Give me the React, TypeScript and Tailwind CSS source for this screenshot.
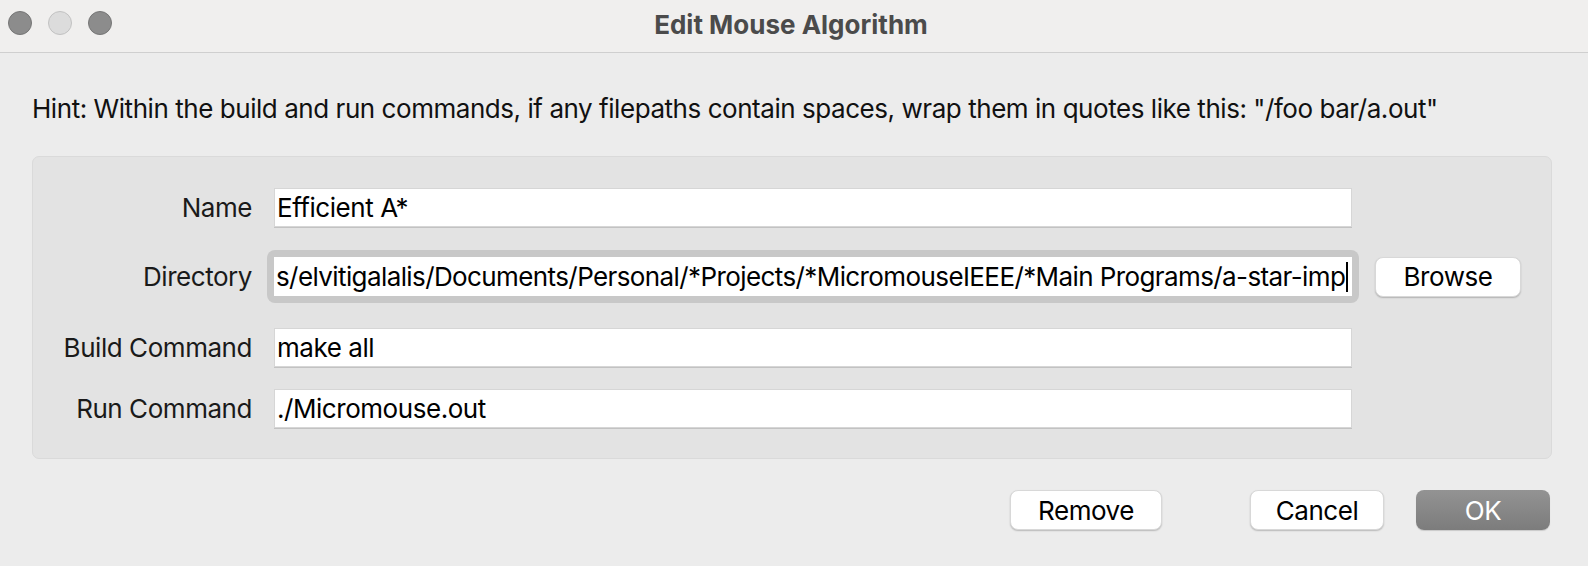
import React from "react";

const font = { fontFamily: "Inter, 'Noto Sans', sans-serif" };

function TrafficLights() {
  return (
    <div className="absolute left-[8px] top-[11px] flex gap-[16px]">
      <span className="size-[24px] rounded-full bg-[#8c8c8c] border border-[#767676]" />
      <span className="size-[24px] rounded-full bg-[#dcdcdc] border border-[#c2c2c2]" />
      <span className="size-[24px] rounded-full bg-[#8c8c8c] border border-[#767676]" />
    </div>
  );
}

function Field({ value }: { value: string }) {
  return (
    <div className="w-[1078px] h-[39px] bg-white border border-[#d6d6d6] shadow-[0_1px_0_#c2c2c2] flex items-center pl-[2px] text-[26px] tracking-[-0.45px] text-black whitespace-nowrap overflow-hidden">
      {value}
    </div>
  );
}

function Label({ children }: { children: React.ReactNode }) {
  return (
    <div className="w-[219px] text-right text-[26px] tracking-[-0.45px] text-[#1a1a1a] whitespace-nowrap">
      {children}
    </div>
  );
}

function Button({ children, primary, className }: { children: React.ReactNode; primary?: boolean; className?: string }) {
  return (
    <button
      className={`h-[40px] rounded-[8px] text-[26px] tracking-[-0.45px] flex items-center justify-center ${
        primary
          ? "bg-gradient-to-b from-[#939393] to-[#7c7c7c] text-white shadow-[0_1px_1px_rgba(0,0,0,0.15)]"
          : "bg-white text-black border border-[#d8d8d8] shadow-[0_1px_1.5px_rgba(0,0,0,0.22)]"
      } ${className ?? ""}`}
    >
      {children}
    </button>
  );
}

export default function App() {
  return (
    <div className="w-[1588px] h-[566px] bg-[#ececec] overflow-hidden" style={font}>
      <div className="relative h-[53px] bg-[#f0efee] border-b border-[#cfcfcf] flex items-center justify-center">
        <TrafficLights />
        <span className="text-[26px] font-bold text-[#4b4b4b] -ml-[6px] -mt-[4px]">Edit Mouse Algorithm</span>
      </div>

      <div className="px-[32px]">
        <p className="pt-[40px] text-[26px] tracking-[-0.45px] text-[#111] leading-[32px] whitespace-nowrap">
          Hint: Within the build and run commands, if any filepaths contain spaces, wrap them in quotes like this: "/foo bar/a.out"
        </p>

        <div className="mt-[31px] w-[1520px] h-[303px] bg-[#e3e3e3] border border-[#dadada] rounded-[7px] pt-[31px]">
          <div className="flex items-center gap-[22px]">
            <Label>Name</Label>
            <Field value="Efficient A*" />
          </div>

          <div className="mt-[23px] flex items-center">
            <Label>Directory</Label>
            <div className="ml-[15px] w-[1092px] h-[53px] rounded-[8px] bg-[#c8c8c8] p-[7px]">
              <div className="h-[39px] bg-white flex items-center pl-[2px] text-[26px] tracking-[-0.6px] text-black whitespace-nowrap overflow-hidden">
                <span>s/elvitigalalis/Documents/Personal/*Projects/*MicromouseIEEE/*Main Programs/a-star-imp</span>
                <span className="ml-[1px] w-[2px] h-[30px] bg-black shrink-0" />
              </div>
            </div>
            <Button className="ml-[16px] w-[146px]">Browse</Button>
          </div>

          <div className="mt-[25px] flex items-center gap-[22px]">
            <Label>Build Command</Label>
            <Field value="make all" />
          </div>

          <div className="mt-[22px] flex items-center gap-[22px]">
            <Label>Run Command</Label>
            <Field value="./Micromouse.out" />
          </div>
        </div>

        <div className="mt-[31px] flex">
          <Button className="ml-[978px] w-[152px]">Remove</Button>
          <Button className="ml-[88px] w-[134px]">Cancel</Button>
          <Button primary className="ml-[32px] w-[134px]">OK</Button>
        </div>
      </div>
    </div>
  );
}
